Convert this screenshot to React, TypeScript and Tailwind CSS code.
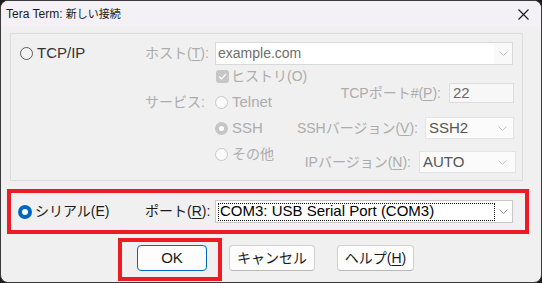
import type { ReactNode } from 'react';

const font = "font-['Liberation_Sans','Noto_Sans_CJK_JP',sans-serif]";

function Chevron({ color = '#a0a0a0' }: { color?: string }) {
  return (
    <svg width="9" height="5" viewBox="0 0 9 5" className="flex-none">
      <polyline points="0.5,0.5 4.5,4.5 8.5,0.5" fill="none" stroke={color} strokeWidth="1" />
    </svg>
  );
}

function Radio({ checked, disabled }: { checked?: boolean; disabled?: boolean }) {
  if (checked && disabled) {
    return (
      <span className="w-[13px] h-[13px] rounded-full bg-[#c6c6c6] flex items-center justify-center flex-none">
        <span className="w-[5px] h-[5px] rounded-full bg-white" />
      </span>
    );
  }
  if (checked) {
    return (
      <span className="w-[14px] h-[14px] rounded-full bg-[#0067c0] flex items-center justify-center flex-none">
        <span className="w-[6px] h-[6px] rounded-full bg-white" />
      </span>
    );
  }
  return (
    <span
      className={`w-[13px] h-[13px] rounded-full border flex-none ${
        disabled ? 'border-[#c8c8c8] bg-[#fafafa]' : 'border-[#5c5c5c] bg-[#f3f3f3]'
      }`}
    />
  );
}

function U({ children }: { children: ReactNode }) {
  return <span className="underline underline-offset-2 decoration-1">{children}</span>;
}

export default function App() {
  const gray = 'text-[#acacac]';
  return (
    <div className={`w-[542px] h-[283px] bg-[#1c1c1c] whitespace-nowrap ${font}`}>
      <div className="w-full h-full rounded-[8px] overflow-hidden border border-[#3a3a3a] bg-[#f0f0f0] flex flex-col">
        {/* title bar */}
        <div className="h-[26px] flex-none bg-[#f3f1f5] flex items-center justify-between pl-[5px] pr-[12px] text-[12px] text-[#1a1a1a]">
          <span>
            Tera Term: <span className="text-[11px]">新しい接続</span>
          </span>
          <svg width="11" height="11" viewBox="0 0 11 11">
            <path d="M0.5 0.5 L10.5 10.5 M10.5 0.5 L0.5 10.5" stroke="#1a1a1a" strokeWidth="1.1" />
          </svg>
        </div>

        <div className="flex-1 flex flex-col">
          {/* TCP/IP group */}
          <div className="mt-[6px] ml-[9px] w-[513px] h-[148px] flex-none border border-[#dcdcdc] flex">
            <div className="w-[134px] pl-[9px] pt-[8px]">
              <div className="h-[23px] flex items-center gap-[4px] text-[15px] text-[#333333]">
                <Radio />
                <span>TCP/IP</span>
              </div>
            </div>
            <div className="flex-1 pt-[8px] flex flex-col">
              <div className="h-[23px] flex items-center">
                <span className={`w-[70px] text-[14px] ${gray}`}>
                  ホスト(<U>T</U>):
                </span>
                <div className="w-[298px] h-[23px] border border-[#d9d9d9] bg-[#f9f9f9] flex items-center">
                  <span className="flex-1 h-full flex items-center pl-[2px] bg-white text-[14px] text-[#6e6e6e]">
                    example.com
                  </span>
                  <span className="w-[18px] h-full flex items-center justify-center">
                    <Chevron color="#c0c0c0" />
                  </span>
                </div>
              </div>

              <div className="flex mt-[-2px]">
                <div className="w-[70px] flex flex-col">
                  <div className="h-[26px]" />
                  <div className={`h-[26px] flex items-center text-[14px] ${gray}`}>サービス:</div>
                </div>
                <div className={`w-[80px] flex flex-col text-[14px] ${gray}`}>
                  <div className="h-[26px] flex items-center gap-[2px] pl-[1px]">
                    <span className="w-[13px] h-[13px] rounded-[3px] bg-[#c6c6c6] flex items-center justify-center flex-none">
                      <svg width="9" height="7" viewBox="0 0 9 7">
                        <polyline points="1,3.5 3.5,6 8,1" fill="none" stroke="#ffffff" strokeWidth="1.2" />
                      </svg>
                    </span>
                    <span>ヒストリ(O)</span>
                  </div>
                  <div className="h-[26px] flex items-center gap-[4px]">
                    <Radio disabled />
                    <span className="text-[15px]">Telnet</span>
                  </div>
                  <div className="h-[26px] flex items-center gap-[4px]">
                    <Radio checked disabled />
                    <span className="text-[15px]">SSH</span>
                  </div>
                  <div className="h-[26px] flex items-center gap-[4px]">
                    <Radio disabled />
                    <span>その他</span>
                  </div>
                </div>
                <div className={`flex-1 flex flex-col items-end pr-[8px] text-[14px] ${gray}`}>
                  <div className="mt-[20px] h-[20px] flex items-center gap-[8px]">
                    <span>
                      TCPポート#(<U>P</U>):
                    </span>
                    <span className="w-[65px] h-[20px] border border-[#dcdcdc] bg-[#f7f7f7] flex items-center pl-[3px] text-[15px] text-[#6a6a6a]">
                      22
                    </span>
                  </div>
                  <div className="mt-[14px] h-[22px] flex items-center gap-[7px]">
                    <span>
                      SSHバージョン(<U>V</U>):
                    </span>
                    <span className="w-[89px] h-[22px] border border-[#e3e3e3] bg-[#fbfbfb] flex items-center justify-between pl-[3px] pr-[6px] text-[15px] text-[#555555]">
                      SSH2
                      <Chevron color="#c4c4c4" />
                    </span>
                  </div>
                  <div className="mt-[12px] mr-[-2px] h-[22px] flex items-center gap-[8px]">
                    <span>
                      IPバージョン(<U>N</U>):
                    </span>
                    <span className="w-[97px] h-[22px] border border-[#e3e3e3] bg-[#fbfbfb] flex items-center justify-between pl-[3px] pr-[8px] text-[15px] text-[#555555]">
                      AUTO
                      <Chevron color="#c4c4c4" />
                    </span>
                  </div>
                </div>
              </div>
            </div>
          </div>

          {/* serial row, highlighted */}
          <div className="mt-[8px] ml-[6px] w-[522px] h-[45px] flex-none border-4 border-[#ed1c24] flex items-center text-[#1a1a1a]">
            <div className="w-[134px] pl-[7px] flex items-center gap-[3px] text-[14px]">
              <Radio checked />
              <span>シリアル(E)</span>
            </div>
            <span className="w-[70px] text-[14px]">
              ポート(<U>R</U>):
            </span>
            <div className="w-[298px] h-[23px] border border-[#c8c8c8] bg-white flex items-center">
              <span className="ml-[2px] w-[277px] h-[18px] border border-dotted border-[#111111] flex items-center pl-[1px] text-[15px] text-black">
                COM3: USB Serial Port (COM3)
              </span>
              <span className="flex-1 flex items-center justify-center">
                <Chevron color="#909090" />
              </span>
            </div>
          </div>

          {/* buttons */}
          <div className="mt-[4px] pl-[117px] flex items-start text-[15px] text-[#1a1a1a]">
            <div className="w-[104px] h-[43px] border-4 border-[#ed1c24] pt-[3px] pl-[15px]">
              <button className="w-[70px] h-[26px] rounded-[4px] border border-[#0067c0] bg-[#fdfdfd] flex items-center justify-center">
                OK
              </button>
            </div>
            <button className="ml-[7px] mt-[7px] w-[86px] h-[26px] rounded-[4px] border border-[#d0d0d0] border-b-[#b8b8b8] bg-[#fdfdfd] flex items-center justify-center text-[14px]">
              キャンセル
            </button>
            <button className="ml-[22px] mt-[7px] w-[77px] h-[26px] rounded-[4px] border border-[#d0d0d0] border-b-[#b8b8b8] bg-[#fdfdfd] flex items-center justify-center text-[14px]">
              ヘルプ(<U>H</U>)
            </button>
          </div>
        </div>
      </div>
    </div>
  );
}
